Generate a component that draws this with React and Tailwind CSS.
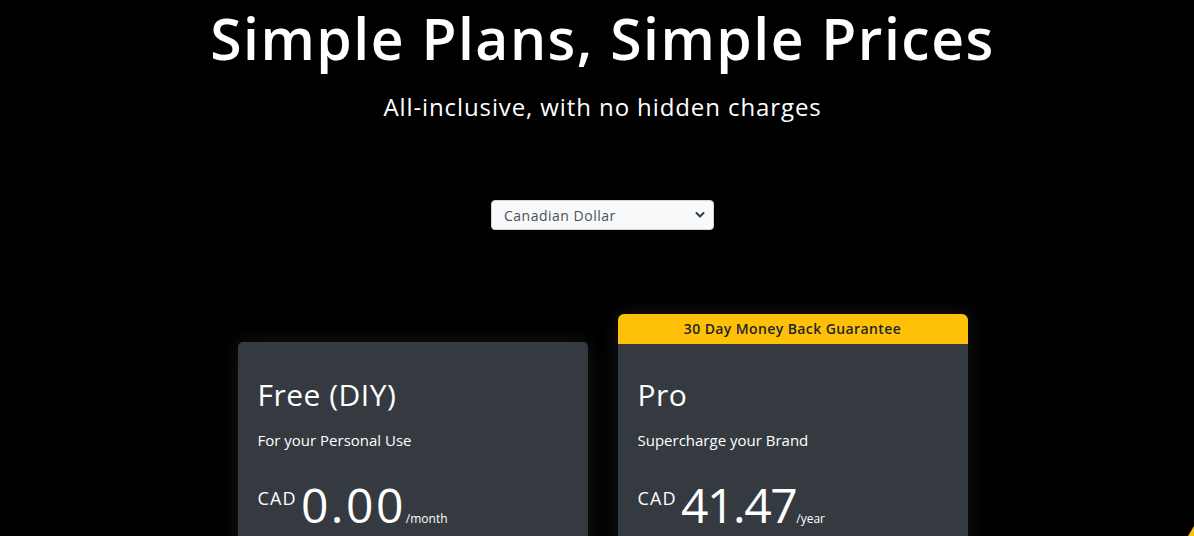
import React from "react";

const font = { fontFamily: '"Open Sans", "Noto Sans", sans-serif' };

function Chevron() {
  return (
    <svg width="10" height="8" viewBox="0 0 10 8" className="absolute right-[9px] top-[11px] pointer-events-none">
      <path d="M1.5 2 L5 5.5 L8.5 2" fill="none" stroke="#343a40" strokeWidth="2" strokeLinecap="round" strokeLinejoin="round" />
    </svg>
  );
}

function Price({ amount, period, amountClass }) {
  return (
    <div className="flex items-baseline mt-[30px]">
      <span className="self-start text-[18px] leading-none mt-[8px] tracking-[1.2px]">CAD</span>
      <span className={"text-[48px] leading-none ml-[4px] " + amountClass}>{amount}</span>
      <span className="text-[12px] leading-none">{period}</span>
    </div>
  );
}

export default function App() {
  return (
    <div className="relative h-[536px] overflow-hidden bg-black text-white" style={font}>
      <div className="pl-[11px]">
        <h1 className="pt-[4px] text-center text-[57px] font-semibold leading-[68px] tracking-[1.5px]">Simple Plans, Simple Prices</h1>
        <p className="mt-[19px] text-center text-[24px] leading-[32px] tracking-[0.9px]">All-inclusive, with no hidden charges</p>

        <div className="mt-[77px] flex justify-center">
          <div className="relative w-[223px]">
            <select className="h-[30px] w-full appearance-none rounded-[4px] border border-[#ced4da] bg-[#f8f9fa] pl-[12px] text-[14px] tracking-[0.5px] text-[#495057] outline-none">
              <option>Canadian Dollar</option>
            </select>
            <Chevron />
          </div>
        </div>

        <div className="mt-[84px] flex items-start justify-center gap-[30px]">
          <div className="mt-[28px] h-[300px] w-[350px] rounded-[5px] bg-[#343a40] px-[20px] pt-[36px] shadow-[0_0_20px_rgba(40,40,40,0.6)]">
            <h3 className="text-[30px] leading-[34px] tracking-[0.5px]">Free (DIY)</h3>
            <p className="mt-[17px] text-[15px] leading-[22px]">For your Personal Use</p>
            <Price amount="0.00" period="/month" amountClass="tracking-[2.5px]" />
          </div>

          <div className="w-[350px] rounded-[6px] shadow-[0_0_20px_rgba(40,40,40,0.6)]">
            <div className="h-[30px] rounded-t-[6px] bg-[#ffc107] text-center text-[14px] font-semibold leading-[30px] tracking-[0.4px] text-[#212529]">
              30 Day Money Back Guarantee
            </div>
            <div className="h-[300px] bg-[#343a40] px-[20px] pt-[34px]">
              <h3 className="text-[30px] leading-[34px] tracking-[0.5px]">Pro</h3>
              <p className="mt-[17px] text-[15px] leading-[22px]">Supercharge your Brand</p>
              <Price amount="41.47" period="/year" amountClass="tracking-[-1.4px]" />
            </div>
          </div>
        </div>
      </div>

      <svg width="6" height="10" viewBox="0 0 6 10" className="absolute bottom-0 right-0">
        <polygon points="6,0 6,10 0,10" fill="#ffc107" />
      </svg>
    </div>
  );
}
